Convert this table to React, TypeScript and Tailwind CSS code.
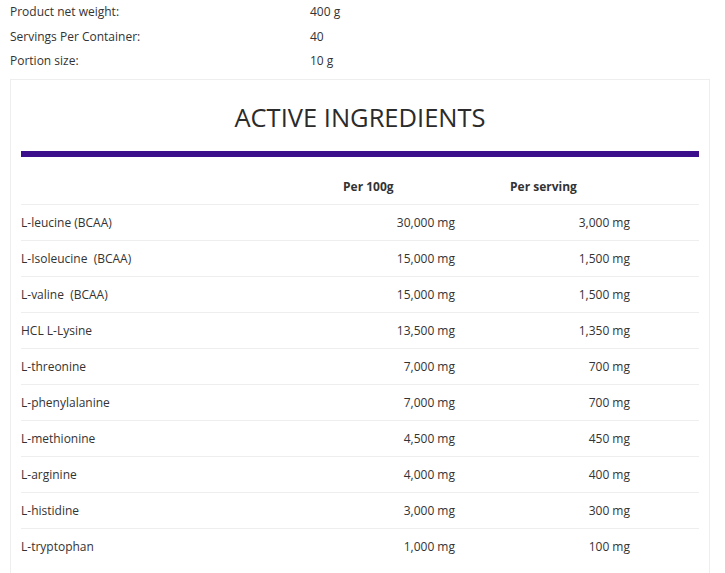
const specs = [
  { label: "Product net weight:", value: "400 g" },
  { label: "Servings Per Container:", value: "40" },
  { label: "Portion size:", value: "10 g" },
];

const ingredients = [
  { name: "L-leucine (BCAA)", per100: "30,000 mg", serving: "3,000 mg" },
  { name: "L-Isoleucine  (BCAA)", per100: "15,000 mg", serving: "1,500 mg" },
  { name: "L-valine  (BCAA)", per100: "15,000 mg", serving: "1,500 mg" },
  { name: "HCL L-Lysine", per100: "13,500 mg", serving: "1,350 mg" },
  { name: "L-threonine", per100: "7,000 mg", serving: "700 mg" },
  { name: "L-phenylalanine", per100: "7,000 mg", serving: "700 mg" },
  { name: "L-methionine", per100: "4,500 mg", serving: "450 mg" },
  { name: "L-arginine", per100: "4,000 mg", serving: "400 mg" },
  { name: "L-histidine", per100: "3,000 mg", serving: "300 mg" },
  { name: "L-tryptophan", per100: "1,000 mg", serving: "100 mg" },
];

export default function App() {
  return (
    <div className="w-[725px] h-[573px] overflow-hidden bg-white text-[#333333] font-['Open_Sans',sans-serif] text-[12px]">
      {/* Product specs */}
      <div className="px-[10px]">
        {specs.map((s) => (
          <div key={s.label} className="flex h-[24.5px] items-center">
            <span className="w-[300px]">{s.label}</span>
            <span>{s.value}</span>
          </div>
        ))}
      </div>

      {/* Ingredients card */}
      <div className="ml-[10px] mt-[5px] w-[700px] border border-[#eeeeee] px-[10px] pb-4">
        <h2 className="pt-[22px] text-center text-[25.5px] leading-[30px] font-medium text-[#2b2b2b]">
          ACTIVE INGREDIENTS
        </h2>
        <div className="mt-[19px] h-[6px] bg-[#3b0f8c]"></div>

        <div className="flex pt-[21px] pb-[8px] leading-[18px] font-bold">
          <div className="w-[322px]"></div>
          <div className="w-[167px]">Per 100g</div>
          <div>Per serving</div>
        </div>

        {ingredients.map((row) => (
          <div key={row.name} className="flex h-[36px] items-center pt-[2px] border-t border-[#eeeeee] whitespace-pre">
            <div className="w-[322px]">{row.name}</div>
            <div className="w-[112px] text-right">{row.per100}</div>
            <div className="w-[55px]"></div>
            <div className="w-[120px] text-right">{row.serving}</div>
          </div>
        ))}
      </div>
    </div>
  );
}
